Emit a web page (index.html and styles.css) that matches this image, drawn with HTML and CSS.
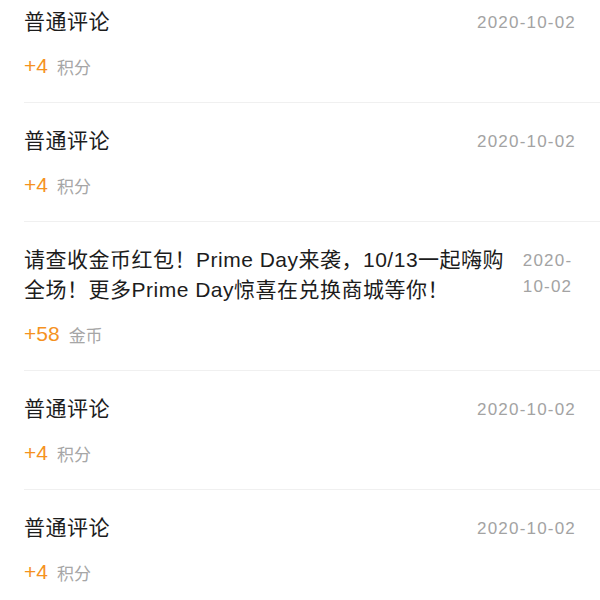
FILE: index.html
```html
<!DOCTYPE html>
<html lang="zh-CN">
<head>
  <meta charset="UTF-8">
  <title>积分记录</title>
  <link rel="stylesheet" href="styles.css">
</head>
<body>
  <ul class="record-list">
    <li class="record">
      <div class="record-head">
        <span class="record-title">普通评论</span>
        <span class="record-date">2020-10-02</span>
      </div>
      <div class="record-points"><span class="amount">+4</span><span class="unit">积分</span></div>
    </li>
    <li class="record">
      <div class="record-head">
        <span class="record-title">普通评论</span>
        <span class="record-date">2020-10-02</span>
      </div>
      <div class="record-points"><span class="amount">+4</span><span class="unit">积分</span></div>
    </li>
    <li class="record">
      <div class="record-head">
        <span class="record-title">请查收金币红包！Prime Day来袭，10/13一起嗨购全场！更多Prime Day惊喜在兑换商城等你！</span>
        <span class="record-date">2020-<wbr>10-02</span>
      </div>
      <div class="record-points"><span class="amount">+58</span><span class="unit">金币</span></div>
    </li>
    <li class="record">
      <div class="record-head">
        <span class="record-title">普通评论</span>
        <span class="record-date">2020-10-02</span>
      </div>
      <div class="record-points"><span class="amount">+4</span><span class="unit">积分</span></div>
    </li>
    <li class="record">
      <div class="record-head">
        <span class="record-title">普通评论</span>
        <span class="record-date">2020-10-02</span>
      </div>
      <div class="record-points"><span class="amount">+4</span><span class="unit">积分</span></div>
    </li>
  </ul>
</body>
</html>
```

FILE: styles.css
```css
body {
  margin: 0;
  background: #fff;
  font-family: "Liberation Sans", "Noto Sans CJK SC", sans-serif;
  color: #1c1c1c;
  overflow: hidden;
}

.record-list {
  list-style: none;
  margin: -16px 0 0 24px;
  padding: 0;
}

.record {
  padding: 23px 24px 22px 0;
  border-bottom: 1px solid #f0f0f0;
}

.record-head {
  display: flex;
  align-items: flex-start;
  gap: 12px;
}

.record-title {
  flex: 1 1 auto;
  font-size: 21px;
  line-height: 30px;
  letter-spacing: 0.5px;
}

.record-date {
  font-size: 17px;
  line-height: 26px;
  padding-top: 3px;
  letter-spacing: 1.2px;
  color: #a3a3a3;
}

.record-points {
  margin-top: 15px;
  height: 28px;
  display: flex;
  align-items: center;
}

.amount {
  font-size: 21px;
  color: #f5921e;
}

.unit {
  margin-left: 9px;
  font-size: 17px;
  color: #a6a6a6;
}
```
